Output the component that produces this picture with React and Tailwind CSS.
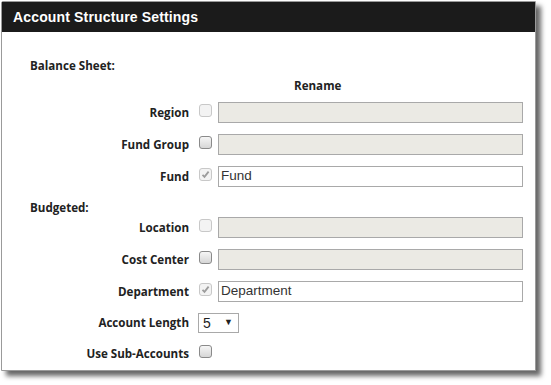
import React from "react";

const LABEL = "font-['Open_Sans',sans-serif] font-bold text-[11.6px] leading-[16px] text-[#222]";

function Box({ kind }) {
  if (kind === "enabled") {
    return (
      <div className="w-[13px] h-[13px] rounded-[3px] border border-[#8a8a8a] bg-gradient-to-b from-[#f6f6f6] to-[#d6d6d6] shrink-0 mb-[4px]" />
    );
  }
  return (
    <div className="relative w-[13px] h-[13px] rounded-[3px] border border-[#c8c8c8] bg-[#f3f3f3] shrink-0 mb-[4px]">
      {kind === "checked" && (
        <svg className="absolute left-0 top-0" width="11" height="11" viewBox="0 0 11 11">
          <path d="M2.5 5.8 L4.5 7.8 L8.6 2.6" fill="none" stroke="#9c9c9c" strokeWidth="1.8" />
        </svg>
      )}
    </div>
  );
}

function Row({ label, box, value, disabled, className = "" }) {
  return (
    <div className={"flex items-center h-[21px] " + className}>
      <div className={"w-[187px] text-right " + LABEL}>{label}</div>
      <div className="ml-[10px]">
        <Box kind={box} />
      </div>
      <div
        className={
          "ml-[6px] w-[305px] h-[21px] border border-[#a9a9a9] flex items-center pl-[2px] font-['Liberation_Sans',Arial,sans-serif] text-[13.5px] text-[#333] " +
          (disabled ? "bg-[#ebeae4]" : "bg-white")
        }
      >
        {value}
      </div>
    </div>
  );
}

export default function App() {
  return (
    <div className="w-[551px] h-[385px] bg-white overflow-hidden">
      <div className="ml-[1px] mt-[1px] w-[535px] h-[370px] border border-[#9a9a9a] rounded-tl-[2px] bg-white shadow-[5px_5px_5px_rgba(0,0,0,0.6)] flex flex-col">
        <div className="h-[30px] bg-[#1b1b1b] flex items-center pl-[11px]">
          <span className="font-['Liberation_Sans',Arial,sans-serif] font-bold text-[14px] tracking-[0.15px] text-white">
            Account Structure Settings
          </span>
        </div>
        <div className="flex flex-col">
          <div className={"pl-[28px] mt-[26px] " + LABEL}>Balance Sheet:</div>
          <div className={"pl-[292px] mt-[4px] " + LABEL}>Rename</div>
          <Row className="mt-[8px]" label="Region" box="disabled" disabled value="" />
          <Row className="mt-[11px]" label="Fund Group" box="enabled" disabled value="" />
          <Row className="mt-[11px]" label="Fund" box="checked" value="Fund" />
          <div className={"pl-[28px] mt-[13px] " + LABEL}>Budgeted:</div>
          <Row className="mt-[1px]" label="Location" box="disabled" disabled value="" />
          <Row className="mt-[11px]" label="Cost Center" box="enabled" disabled value="" />
          <Row className="mt-[11px]" label="Department" box="checked" value="Department" />
          <div className="flex items-center h-[20px] mt-[11px]">
            <div className={"w-[187px] text-right " + LABEL}>Account Length</div>
            <div className="ml-[9px] w-[41px] h-[20px] border border-[#a9a9a9] bg-white flex items-center pl-[4px] pr-[5px] justify-between font-['Liberation_Sans',Arial,sans-serif] text-[14px] text-[#222]">
              <span>5</span>
              <span className="text-[9px]">▼</span>
            </div>
          </div>
          <div className="flex items-center h-[21px] mt-[10px]">
            <div className={"w-[187px] text-right " + LABEL}>Use Sub-Accounts</div>
            <div className="ml-[10px]">
              <Box kind="enabled" />
            </div>
          </div>
        </div>
      </div>
    </div>
  );
}
